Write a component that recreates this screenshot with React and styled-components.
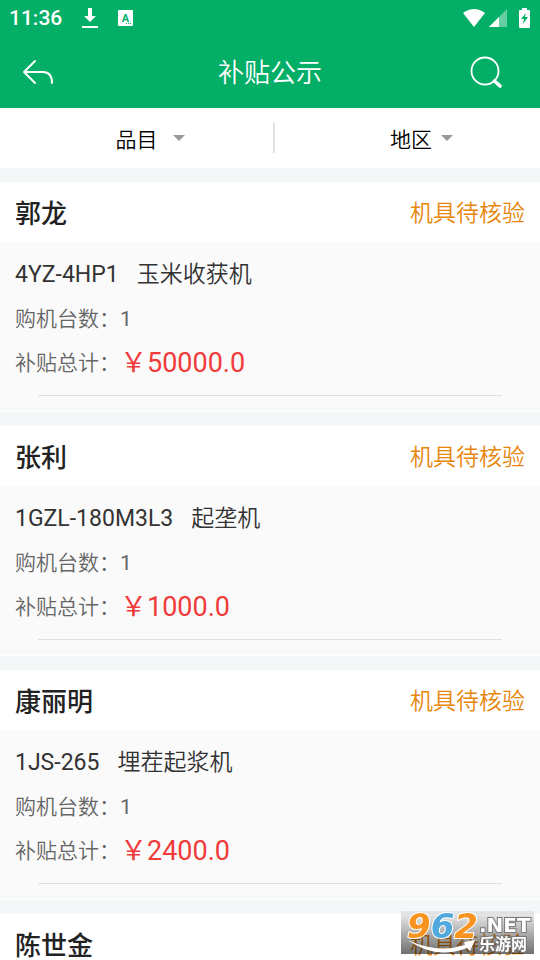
import React from 'react';
import styled, { createGlobalStyle } from 'styled-components';

const GlobalStyle = createGlobalStyle`
  * {
    box-sizing: border-box;
  }

  body {
    margin: 0;
    background-color: #f3f7f8;
    font-family: Roboto, "Noto Sans CJK SC", sans-serif;
  }
`;

// Styled components
const Screen = styled.div`
  display: flex;
  flex-direction: column;
  height: 100vh;
  overflow: hidden;
`;

const TopArea = styled.header`
  flex: none;
  background-color: #03ae66;
  color: #fff;
`;

const StatusBar = styled.div`
  display: flex;
  align-items: center;
  justify-content: space-between;
  height: 36px;
  padding: 0 10px 0 9px;
`;

const StatusGroup = styled.div`
  display: flex;
  align-items: center;
  gap: ${(props) => props.$gap};
`;

const Clock = styled.time`
  font-size: 21px;
  font-weight: 500;
  line-height: 36px;
`;

const NavBar = styled.div`
  display: grid;
  grid-template-columns: 76px 1fr 76px;
  align-items: center;
  height: 72px;
`;

const IconButton = styled.button`
  display: flex;
  align-items: center;
  justify-content: ${(props) => props.$align};
  height: 72px;
  padding: 0 38px 0 22px;
  border: none;
  background: none;
  color: inherit;
  cursor: pointer;

  svg {
    flex: none;
  }
`;

const Title = styled.h1`
  margin: 0;
  padding-top: 2px;
  font-size: 26px;
  font-weight: 350;
  line-height: 70px;
  text-align: center;
`;

const FilterBar = styled.div`
  display: flex;
  align-items: center;
  flex: none;
  height: 60px;
  padding-left: 8px;
  background-color: #fff;
`;

const Filter = styled.label`
  display: flex;
  flex: 1 1 50%;
  align-items: center;
  justify-content: center;
  gap: ${(props) => props.$gap};
  padding-left: ${(props) => props.$indent};
`;

const FilterSelect = styled.select`
  appearance: none;
  padding: 4px 0 0;
  border: none;
  outline: none;
  background: none;
  color: #000;
  font-family: inherit;
  font-size: 21px;
  font-weight: 350;
  line-height: 30px;
  cursor: pointer;
`;

const FilterDivider = styled.span`
  flex: none;
  width: 2px;
  height: 30px;
  background-color: #e2e2e2;
`;

const List = styled.main`
  flex: 1;
  min-height: 0;
  overflow-y: auto;
  scrollbar-width: none;
`;

const Card = styled.article`
  margin-top: 14px;
  padding-bottom: 1px;
  background-color: #fff;
`;

const CardHeader = styled.div`
  display: flex;
  align-items: center;
  justify-content: space-between;
  height: 60px;
  padding: 3px 15px 0;
`;

const Name = styled.h2`
  margin: 0;
  color: #222;
  font-size: 26px;
  font-weight: 500;
  line-height: 56px;
`;

const Status = styled.span`
  color: #e8860c;
  font-size: 23px;
  font-weight: 350;
  line-height: 56px;
`;

const CardBody = styled.div`
  padding: 11px 15px 15px;
  background-color: #fafafa;
`;

const Machine = styled.p`
  display: flex;
  gap: 18px;
  margin: 0;
  color: #333;
  font-size: 23px;
  line-height: 44px;
`;

const Row = styled.p`
  display: flex;
  align-items: center;
  height: 44px;
  margin: 0;
  color: #666;
  font-size: 21px;
  line-height: 44px;
`;

const Chinese = styled.span`
  font-weight: 350;
`;

const Amount = styled.span`
  color: #f13a3a;
  font-size: 27px;
`;

const CardRule = styled.hr`
  height: 1px;
  margin: 10px 23px 0;
  border: none;
  background-color: #e0e0e0;
`;

const Watermark = styled.div`
  position: fixed;
  right: 6px;
  bottom: 6px;
  width: 133px;
  height: 43px;
  background: linear-gradient(rgba(0, 0, 0, 0.06), rgba(0, 0, 0, 0.56));
`;

// Icons
const DownloadIcon = () => (
  <svg width="16" height="22" viewBox="0 0 16 22" fill="#fff">
    <path d="M6 1h4v8h4l-6 6-6-6h4z" />
    <path d="M0 19h16v2H0z" />
  </svg>
);

const KeyboardIcon = () => (
  <svg width="15" height="16" viewBox="0 0 15 16">
    <rect width="15" height="16" rx="1" fill="#fff" />
    <text x="7.5" y="11.5" fill="#03ae66" fontSize="11" fontWeight="700" textAnchor="middle">A</text>
    <path d="M8 13h1v1H8zM10 13h1v1h-1zM12 13h1v1h-1z" fill="#03ae66" />
  </svg>
);

const WifiIcon = () => (
  <svg width="22" height="18" viewBox="0 0 22 18" fill="#fff">
    <path d="M0 4Q11-4 22 4L11 18z" />
  </svg>
);

const SignalIcon = () => (
  <svg width="18" height="18" viewBox="0 0 18 18" fill="#fff">
    <path d="M0 18L18 0v18z" opacity="0.4" />
    <path d="M0 18L10 8v10z" />
  </svg>
);

const BatteryIcon = () => (
  <svg width="11" height="20" viewBox="0 0 11 20">
    <path d="M3 0h5v2h2q1 0 1 1v16q0 1-1 1H1q-1 0-1-1V3q0-1 1-1h2z" fill="#fff" />
    <path d="M7 5L2 11h3l-1 5 5-7H6z" fill="#03ae66" />
  </svg>
);

const BackIcon = () => (
  <svg width="32" height="26" viewBox="0 0 32 26" fill="none" stroke="#fff" strokeWidth="2" strokeLinecap="round" strokeLinejoin="round">
    <path d="M13 2L2 13l11 11M2 13h19q9 0 9 11" />
  </svg>
);

const SearchIcon = () => (
  <svg width="32" height="32" viewBox="0 0 32 32" fill="none" stroke="#fff" strokeLinecap="round">
    <circle cx="15" cy="15" r="13.5" strokeWidth="1.8" />
    <path d="M24.5 25L30 30" strokeWidth="3.6" />
  </svg>
);

const Caret = () => (
  <svg width="12" height="6" viewBox="0 0 12 6" fill="#999">
    <path d="M0 0h12L6 6z" />
  </svg>
);

const SiteLogo = () => (
  <svg width="133" height="43" viewBox="0 0 133 43">
    <g fontFamily="DejaVu Sans, sans-serif" fontWeight="700" fontStyle="italic" fontSize="34" stroke="#fff" strokeWidth="2" paintOrder="stroke" strokeLinejoin="round">
      <text x="6" y="27">
        <tspan fill="#f7931e">9</tspan>
        <tspan fill="#4fa9dc">6</tspan>
        <tspan fill="#f7931e">2</tspan>
      </text>
    </g>
    <g fill="#fff" stroke="#777" strokeWidth="2" paintOrder="stroke" fontWeight="700">
      <text x="78" y="21" fontSize="20" fontFamily="DejaVu Sans, sans-serif">.NET</text>
      <text x="78" y="39" fontSize="16" fontFamily="Noto Sans CJK SC, sans-serif">乐游网</text>
    </g>
    <path d="M7 29Q36 43 64 34l-1-3 11-2-5 11-3-3Q34 49 7 29z" fill="#fff" />
  </svg>
);

const records = [
  { name: '郭龙', status: '机具待核验', model: '4YZ-4HP1', machine: '玉米收获机', count: 1, total: '50000.0' },
  { name: '张利', status: '机具待核验', model: '1GZL-180M3L3', machine: '起垄机', count: 1, total: '1000.0' },
  { name: '康丽明', status: '机具待核验', model: '1JS-265', machine: '埋茬起浆机', count: 1, total: '2400.0' },
  { name: '陈世金', status: '机具待核验' },
];

const RecordCard = ({ record }) => (
  <Card>
    <CardHeader>
      <Name>{record.name}</Name>
      <Status>{record.status}</Status>
    </CardHeader>
    {record.model && (
      <CardBody>
        <Machine>
          <span>{record.model}</span>
          <Chinese>{record.machine}</Chinese>
        </Machine>
        <Row>
          <Chinese>购机台数：</Chinese>
          {record.count}
        </Row>
        <Row>
          <Chinese>补贴总计：</Chinese>
          <Amount>￥{record.total}</Amount>
        </Row>
        <CardRule />
      </CardBody>
    )}
  </Card>
);

const App = () => {
  return (
    <Screen>
      <GlobalStyle />
      <TopArea>
        <StatusBar>
          <StatusGroup $gap="20px">
            <Clock>11:36</Clock>
            <DownloadIcon />
            <KeyboardIcon />
          </StatusGroup>
          <StatusGroup $gap="12px">
            <StatusGroup $gap="4px">
              <WifiIcon />
              <SignalIcon />
            </StatusGroup>
            <BatteryIcon />
          </StatusGroup>
        </StatusBar>
        <NavBar>
          <IconButton type="button" $align="flex-start" aria-label="返回">
            <BackIcon />
          </IconButton>
          <Title>补贴公示</Title>
          <IconButton type="button" $align="flex-end" aria-label="搜索">
            <SearchIcon />
          </IconButton>
        </NavBar>
      </TopArea>

      <FilterBar>
        <Filter $gap="16px" $indent="20px">
          <FilterSelect aria-label="品目">
            <option>品目</option>
          </FilterSelect>
          <Caret />
        </Filter>
        <FilterDivider />
        <Filter $gap="9px" $indent="28px">
          <FilterSelect aria-label="地区">
            <option>地区</option>
          </FilterSelect>
          <Caret />
        </Filter>
      </FilterBar>

      <List>
        {records.map((record) => (
          <RecordCard key={record.name} record={record} />
        ))}
      </List>

      <Watermark>
        <SiteLogo />
      </Watermark>
    </Screen>
  );
};

export default App;
